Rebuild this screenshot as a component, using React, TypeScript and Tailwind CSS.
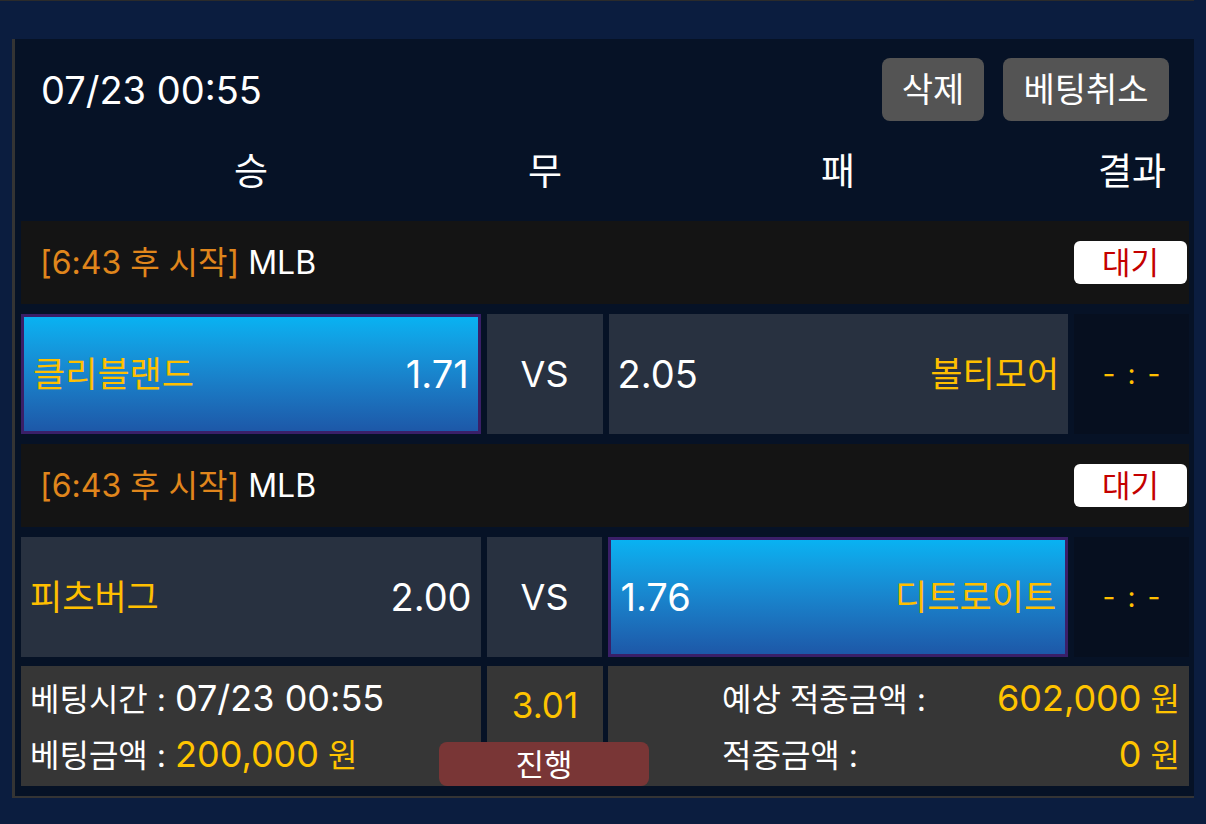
const font = { fontFamily: 'Inter, "Noto Sans CJK KR", sans-serif' };

function Num({ children }: { children: React.ReactNode }) {
  return <span className="text-[36px]">{children}</span>;
}

function MatchHeader() {
  return (
    <div className="flex items-center justify-between h-[83px] bg-[#141414] pl-[19px] pr-[2px]">
      <div className="text-[32px] leading-none">
        <span className="text-[#e0861c]">[6:43 후 시작]</span>
        <span className="text-white"> MLB</span>
      </div>
      <div className="w-[113px] h-[43px] rounded-md bg-white flex items-center justify-center text-[#c40000] text-[31px] leading-none">
        대기
      </div>
    </div>
  );
}

function TeamCell({
  name,
  odds,
  selected,
  reverse,
}: {
  name: string;
  odds: string;
  selected?: boolean;
  reverse?: boolean;
}) {
  const cls = selected
    ? "border-[3px] border-[#3a1f68] bg-gradient-to-b from-[#08b2f2] to-[#1d58a8]"
    : "bg-[#283140]";
  return (
    <div
      className={`w-[460px] flex items-center justify-between px-[9px] ${cls} ${
        reverse ? "flex-row-reverse" : ""
      }`}
    >
      <span className="text-[#ffbf00] text-[35px] leading-none">{name}</span>
      <span className="text-white text-[38px] leading-none">{odds}</span>
    </div>
  );
}

function MatchRow({
  home,
  homeOdds,
  away,
  awayOdds,
  pick,
}: {
  home: string;
  homeOdds: string;
  away: string;
  awayOdds: string;
  pick: "home" | "away";
}) {
  return (
    <div className="flex h-[120px] gap-[6px]">
      <TeamCell name={home} odds={homeOdds} selected={pick === "home"} />
      <div className="w-[116px] bg-[#283140] flex items-center justify-center text-white text-[36px] leading-none">
        VS
      </div>
      <TeamCell name={away} odds={awayOdds} selected={pick === "away"} reverse />
      <div className="w-[115px] bg-[#060f1f] flex items-center justify-center gap-[12px] text-[#ffbf00] text-[28px] leading-none">
        <span>-</span>
        <span>:</span>
        <span>-</span>
      </div>
    </div>
  );
}

export default function App() {
  return (
    <div className="min-h-[824px] w-full bg-[#0b1d3f] relative" style={font}>
      <div className="h-[1px] w-[1194px] bg-[#2b2b2b]" />
      <div className="ml-[12px] mt-[38px] w-[1182px] border-l-[3px] border-b-[2px] border-[#343434] bg-[#061226] pt-[19px] pl-[6px] pr-[5px] pb-[10px]">
        {/* top bar */}
        <div className="flex items-center justify-between h-[63px]">
          <div className="text-white text-[38px] leading-none pl-[20px]">07/23 00:55</div>
          <div className="flex gap-[19px] pr-[20px]">
            <button className="w-[102px] h-[63px] rounded-lg bg-[#545454] text-white text-[34px] leading-none">
              삭제
            </button>
            <button className="w-[166px] h-[63px] rounded-lg bg-[#545454] text-white text-[34px] leading-none">
              베팅취소
            </button>
          </div>
        </div>

        {/* column titles */}
        <div className="flex h-[100px] items-center text-white text-[37px] leading-none">
          <div className="w-[460px] text-center">승</div>
          <div className="w-[116px] ml-[6px] text-center">무</div>
          <div className="w-[460px] ml-[5px] text-center">패</div>
          <div className="w-[115px] ml-[6px] text-right pr-[23px]">결과</div>
        </div>

        <div className="flex flex-col gap-[10px]">
          <MatchHeader />
          <MatchRow home="클리블랜드" homeOdds="1.71" away="볼티모어" awayOdds="2.05" pick="home" />
          <MatchHeader />
          <MatchRow home="피츠버그" homeOdds="2.00" away="디트로이트" awayOdds="1.76" pick="away" />
        </div>

        {/* summary */}
        <div className="relative flex h-[120px] gap-[6px] mt-[9px] text-[32px] leading-none">
          <div className="w-[460px] bg-[#363636] flex flex-col justify-center gap-[20px] pl-[9px] text-white">
            <div>
              베팅시간 : <Num>07/23 00:55</Num>
            </div>
            <div>
              베팅금액 : <span className="text-[#ffc400]"><Num>200,000</Num> 원</span>
            </div>
          </div>
          <div className="w-[116px] bg-[#363636] flex justify-center pt-[22px] text-[#ffc400] text-[35px]">
            3.01
          </div>
          <div className="flex-1 ml-[-1px] bg-[#363636] flex flex-col justify-center gap-[20px] pl-[114px] pr-[9px] text-white">
            <div className="flex justify-between items-baseline">
              <span>예상 적중금액 :</span>
              <span className="text-[#ffc400]"><Num>602,000</Num> 원</span>
            </div>
            <div className="flex justify-between items-baseline">
              <span>적중금액 :</span>
              <span className="text-[#ffc400]"><Num>0</Num> 원</span>
            </div>
          </div>
          <div className="absolute left-[418px] bottom-0 w-[210px] h-[44px] rounded-lg bg-[#793636] flex items-center justify-center text-white text-[31px]">
            진행
          </div>
        </div>
      </div>
    </div>
  );
}
